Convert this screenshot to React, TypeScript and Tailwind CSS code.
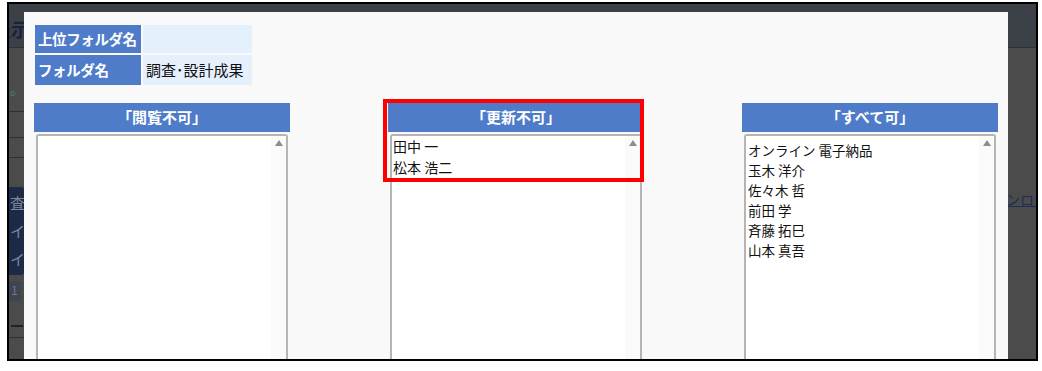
import React from "react";

const jp = { fontFamily: '"Noto Sans CJK JP", "Noto Sans", sans-serif' };

function ScrollTrack() {
  return (
    <div className="w-[15px] shrink-0 bg-[#fafafa] flex justify-center pt-[4px]">
      <div className="w-0 h-0 border-l-[4.5px] border-r-[4.5px] border-b-[6px] border-l-transparent border-r-transparent border-b-[#8c8c8c]" />
    </div>
  );
}

function Column({
  title,
  items,
  size,
  highlight,
}: {
  title: string;
  items: string[];
  size: "sm" | "md";
  highlight?: boolean;
}) {
  return (
    <div className="relative w-[256px] flex flex-col">
      <div className="h-[29px] bg-[#4f7cc9] text-white font-bold text-[15px] flex items-center justify-center">
        {title}
      </div>
      <div className="mx-[2px] mt-[2px] h-[240px] bg-white border-2 border-b-0 border-[#b5b5b5] rounded-t-[3px] flex">
        <div
          className={
            size === "md"
              ? "flex-1 pl-[1px] pt-0 text-[14px] leading-[21px] text-[#111] whitespace-nowrap"
              : "flex-1 pl-[2px] pt-[4px] text-[13.5px] leading-[20px] text-[#111] whitespace-nowrap"
          }
        >
          {items.map((it) => (
            <div key={it}>{it}</div>
          ))}
        </div>
        <ScrollTrack />
      </div>
      {highlight && (
        <div className="absolute left-[-5px] top-[-4px] w-[261px] h-[83px] border-4 border-[#ff0000]" />
      )}
    </div>
  );
}

export default function App() {
  return (
    <div className="w-[1042px] h-[371px] bg-white pt-[2px] pl-[7px]" style={jp}>
      <div className="relative w-[1031px] h-[359px] border-2 border-black bg-[#4b4b4b] overflow-hidden">
        {/* page behind the dialog */}
        <div className="h-[44px] bg-[#3c4047] border-b border-[#2e3136] flex items-center">
          <span className="ml-[-17px] mt-[8px] text-[19px] font-bold text-[#18233a] whitespace-nowrap">表示</span>
        </div>
        <div className="flex">
          <div className="w-[15px] flex flex-col">
            <div className="h-[63px] text-[9px] text-[#3f8a55] pl-[1px] pt-[38px]">o</div>
            <div className="h-[26px] border-t border-[#2f2f2f]" />
            <div className="h-[20px] border-t border-[#2f2f2f]" />
            <div className="h-[30px] border-t border-[#2f2f2f]" />
            <div className="h-[88px] bg-[#1c2a46] rounded-r-[3px] text-[#7f889b] text-[15px] leading-[28px] pl-[1px] pt-[2px]">
              <div>査</div>
              <div>イ</div>
              <div>イ</div>
            </div>
            <div className="mt-[6px] h-[20px] w-[12px] bg-[#3e4450] rounded-[3px] text-[12px] text-[#6f7788] pl-[2px]">1</div>
            <div className="mt-[24px] h-[2px] w-[12px] ml-[2px] bg-[#222]" />
            <div className="mt-[10px] border-t border-[#2f2f2f]" />
          </div>
          <div className="flex-1 flex justify-end pt-[141px]">
            <span className="mr-[-26px] text-[14px] text-[#1d2b55] underline whitespace-nowrap">ダウンロード</span>
          </div>
        </div>

        {/* dialog */}
        <div className="absolute left-[15px] top-[8px] w-[984px] bottom-0 bg-[#f9f9f9] pt-[13px] px-[10px]">
          <div className="ml-[1px] flex flex-col gap-[2px] w-[217px]">
            <div className="flex gap-[2px] h-[28px]">
              <div className="w-[106px] bg-[#4f7cc9] text-white font-bold text-[14.5px] tracking-[-0.4px] whitespace-nowrap flex items-center pl-[3px]">
                上位フォルダ名
              </div>
              <div className="flex-1 bg-[#e5f0fd]" />
            </div>
            <div className="flex gap-[2px] h-[30px]">
              <div className="w-[106px] bg-[#4f7cc9] text-white font-bold text-[14.5px] tracking-[-0.4px] whitespace-nowrap flex items-center pl-[3px]">
                フォルダ名
              </div>
              <div className="flex-1 bg-[#e5f0fd] text-[15px] text-[#111] whitespace-nowrap flex items-center pl-[3px]">
                調査･設計成果
              </div>
            </div>
          </div>

          <div className="mt-[18px] flex justify-between">
            <Column title="「閲覧不可」" items={[]} size="sm" />
            <Column title="「更新不可」" items={["田中 一", "松本 浩二"]} size="md" highlight />
            <Column
              title="「すべて可」"
              items={["オンライン 電子納品", "玉木 洋介", "佐々木 哲", "前田 学", "斉藤 拓巳", "山本 真吾"]}
              size="sm"
            />
          </div>
        </div>
      </div>
    </div>
  );
}
